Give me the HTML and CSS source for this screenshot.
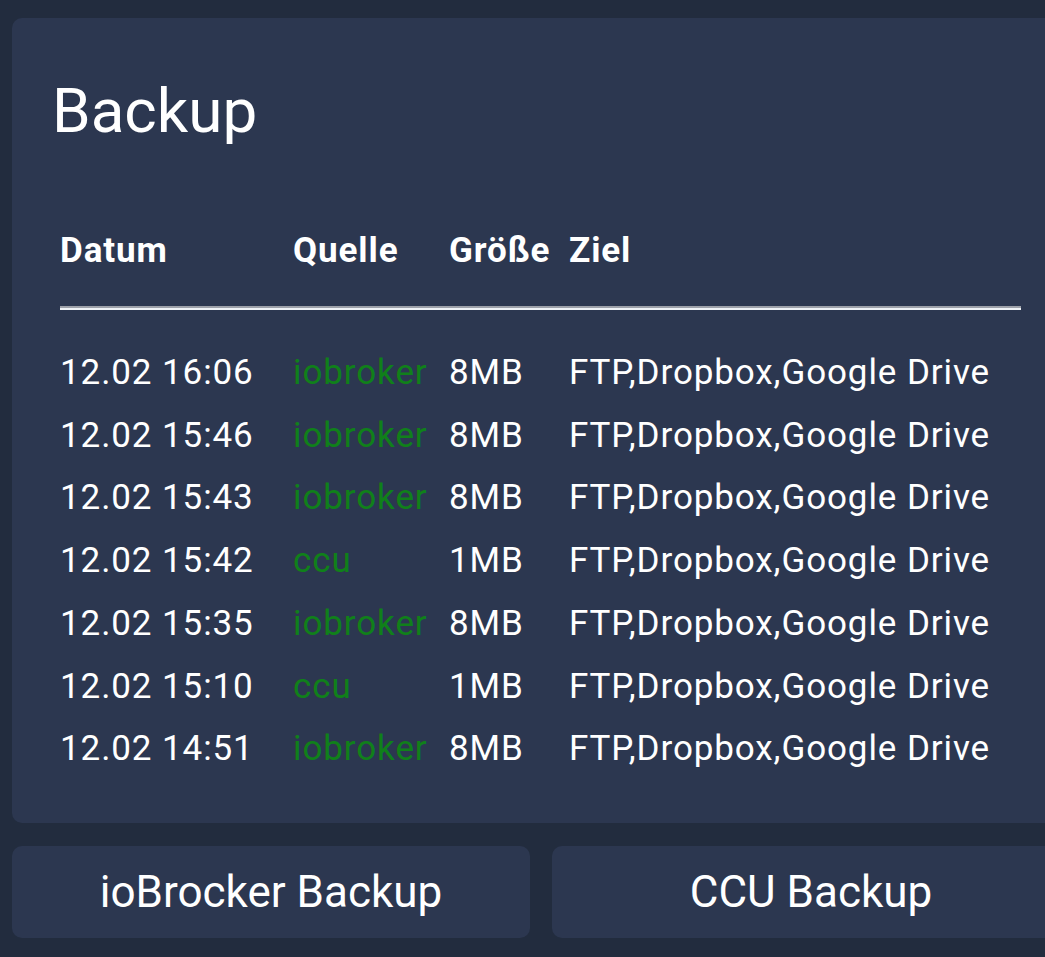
FILE: index.html
```html
<!DOCTYPE html>
<html lang="de">
<head>
<meta charset="utf-8">
<title>Backup</title>
<link rel="stylesheet" href="styles.css">
</head>
<body>
<div class="page">
  <section class="card">
    <h1 class="title">Backup</h1>
    <table class="backups">
      <colgroup>
        <col class="c-date"><col class="c-src"><col class="c-size"><col class="c-dest">
      </colgroup>
      <thead>
        <tr class="head"><th>Datum</th><th>Quelle</th><th>Größe</th><th>Ziel</th></tr>
        <tr class="sep"><td colspan="4"><div class="rule"></div></td></tr>
      </thead>
      <tbody>
        <tr><td>12.02 16:06</td><td class="src">iobroker</td><td>8MB</td><td>FTP,Dropbox,Google Drive</td></tr>
        <tr><td>12.02 15:46</td><td class="src">iobroker</td><td>8MB</td><td>FTP,Dropbox,Google Drive</td></tr>
        <tr><td>12.02 15:43</td><td class="src">iobroker</td><td>8MB</td><td>FTP,Dropbox,Google Drive</td></tr>
        <tr><td>12.02 15:42</td><td class="src">ccu</td><td>1MB</td><td>FTP,Dropbox,Google Drive</td></tr>
        <tr><td>12.02 15:35</td><td class="src">iobroker</td><td>8MB</td><td>FTP,Dropbox,Google Drive</td></tr>
        <tr><td>12.02 15:10</td><td class="src">ccu</td><td>1MB</td><td>FTP,Dropbox,Google Drive</td></tr>
        <tr><td>12.02 14:51</td><td class="src">iobroker</td><td>8MB</td><td>FTP,Dropbox,Google Drive</td></tr>
      </tbody>
    </table>
  </section>
  <div class="actions">
    <button class="btn">ioBrocker Backup</button>
    <button class="btn">CCU Backup</button>
  </div>
</div>
</body>
</html>
```

FILE: styles.css
```css
html, body {
  margin: 0;
  padding: 0;
  background: #222c3e;
  overflow: hidden;
  font-family: Roboto, "Liberation Sans", sans-serif;
  color: #ffffff;
}

.page {
  width: 1058px;
  padding: 18px 0 0 12px;
}

.card {
  background: #2c3750;
  border-radius: 10px;
  height: 805px;
  box-sizing: border-box;
  padding: 62px 0 0 48px;
}

.title {
  margin: 0 0 0 -8px;
  font-size: 62px;
  line-height: 62px;
  font-weight: 400;
}

.backups {
  margin-top: 89px;
  width: 961px;
  border-collapse: collapse;
  table-layout: fixed;
  font-size: 35px;
  letter-spacing: 0.9px;
}

.c-date { width: 233px; }
.c-src { width: 156px; }
.c-size { width: 120px; }

.backups th,
.backups td {
  padding: 0;
  text-align: left;
  white-space: nowrap;
}

.head th {
  font-weight: 700;
  line-height: 40px;
  height: 40px;
}

.sep td {
  padding: 35px 0 32px;
}

.rule {
  border-top: 2px solid #9da1aa;
  border-bottom: 2px solid #eef2f6;
}

.backups tbody td {
  line-height: 62.7px;
  height: 62.7px;
}

.backups td.src {
  color: #10801a;
}

.actions {
  display: flex;
  gap: 22px;
  margin-top: 23px;
}

.btn {
  flex: 1;
  height: 92px;
  border: none;
  border-radius: 10px;
  background: #2c3750;
  color: #ffffff;
  font-family: Roboto, "Liberation Sans", sans-serif;
  font-size: 44px;
  padding: 0;
}
```
